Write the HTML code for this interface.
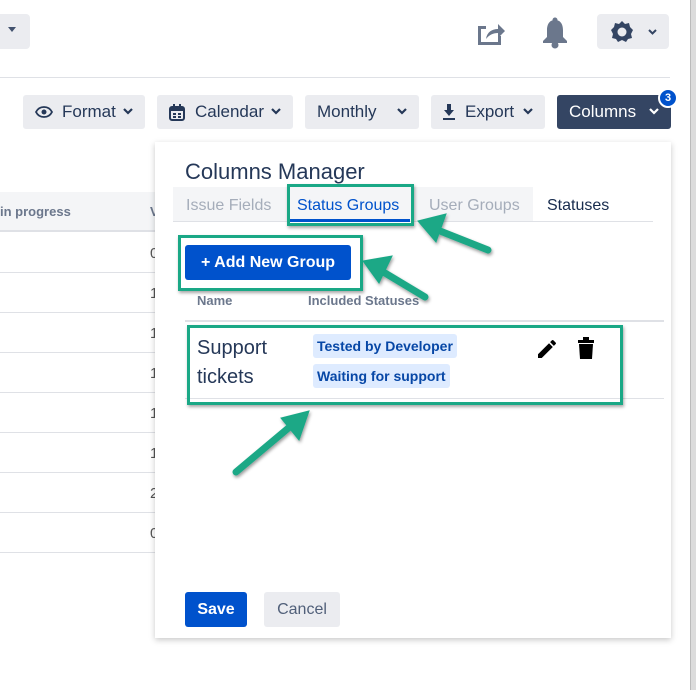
<!DOCTYPE html>
<html><head><meta charset="utf-8"><style>
*{box-sizing:border-box;margin:0;padding:0}
body{width:696px;height:690px;overflow:hidden;background:#fff;font-family:"Liberation Sans",sans-serif;position:relative;color:#172b4d}
.a{position:absolute}
.btn{position:absolute;top:95px;height:34px;background:#ebecf0;border-radius:3px;font-size:17px;color:#253858;display:flex;align-items:center;padding-left:12px}
.chev{position:absolute;right:12px;top:13px}
.rl{position:absolute;left:0;width:155px;height:1px;background:#dfe1e6}
.num{position:absolute;left:150px;font-size:15px;color:#555}
.gb{position:absolute;border:3px solid #1aa886;box-shadow:1px 2px 3px rgba(0,0,0,.35)}
.tag{position:absolute;left:313px;height:24px;background:#deebff;color:#0747a6;font-size:14px;font-weight:bold;padding:4px 4px;border-radius:3px}
</style></head><body>
<div class="a" style="left:0;top:14px;width:30px;height:35px;background:#ebecf0;border-radius:0 4px 4px 0"></div>
<div class="a" style="left:8px;top:27px;border-left:4px solid transparent;border-right:4px solid transparent;border-top:5px solid #42526e"></div>
<svg class="a" style="left:476px;top:20px" width="30" height="26" viewBox="0 0 30 26"><path d="M2 6h8v3H5v13h17v-6h3v9H2z" fill="#6b778c"/><path d="M10 19c1-7 6-10 12-10V4l7 7-7 7v-5c-5 0-9 2-12 6z" fill="#6b778c"/></svg>
<svg class="a" style="left:541px;top:17px" width="28" height="32" viewBox="0 0 28 32"><circle cx="14" cy="3" r="2.5" fill="#6b778c"/><path d="M14 3c-6 0-8 5-8 10v7l-4 4v2h24v-2l-4-4v-7c0-5-2-10-8-10z" fill="#6b778c"/><circle cx="14" cy="28" r="3.5" fill="#6b778c"/></svg>
<div class="a" style="left:597px;top:14px;width:72px;height:35px;background:#ebecf0;border-radius:4px"></div>
<svg class="a" style="left:610px;top:20px" width="24" height="24" viewBox="0 0 24 24"><path d="M12 1l3 3 4-1 1 4 3 3-2 4 1 4-4 1-2 3-4-2-4 2-2-3-4-1 1-4-2-4 3-3 1-4 4 1z" fill="#344563"/><circle cx="12" cy="12" r="4.5" fill="#ebecf0"/></svg>
<svg class="a" style="left:648px;top:29px" width="9" height="6" viewBox="0 0 9 6"><path d="M1 1l3.5 3.5L8 1" fill="none" stroke="#344563" stroke-width="2"/></svg>
<div class="a" style="left:0;top:77px;width:670px;height:1px;background:#dfe1e6"></div>
<div class="a" style="left:690px;top:0;width:6px;height:690px;background:#dcdcdc;border-left:1px solid #bbb"></div>

<div class="btn" style="left:23px;width:122px"><svg width="18" height="12" viewBox="0 0 18 12" style="margin-right:9px"><path d="M1 6c2-4 5-5 8-5s6 1 8 5c-2 4-5 5-8 5S3 10 1 6z" fill="none" stroke="#253858" stroke-width="1.8"/><circle cx="9" cy="6" r="2.5" fill="#253858"/></svg>Format<svg class="chev" width="10" height="7" viewBox="0 0 10 7"><path d="M1 1l4 4 4-4" fill="none" stroke="#253858" stroke-width="2.2"/></svg></div>
<div class="btn" style="left:157px;width:136px"><svg width="16" height="17" viewBox="0 0 16 17" style="margin-right:10px"><rect x="1" y="3" width="14" height="13" rx="2" fill="none" stroke="#253858" stroke-width="2"/><rect x="1" y="3" width="14" height="4" fill="#253858"/><rect x="4" y="9" width="3" height="2" fill="#253858"/><rect x="9" y="9" width="3" height="2" fill="#253858"/><rect x="4" y="12" width="3" height="2" fill="#253858"/><rect x="9" y="12" width="3" height="2" fill="#253858"/><rect x="4" y="0" width="2" height="4" fill="#253858"/><rect x="10" y="0" width="2" height="4" fill="#253858"/></svg>Calendar<svg class="chev" width="10" height="7" viewBox="0 0 10 7"><path d="M1 1l4 4 4-4" fill="none" stroke="#253858" stroke-width="2.2"/></svg></div>
<div class="btn" style="left:305px;width:114px">Monthly<svg class="chev" width="10" height="7" viewBox="0 0 10 7"><path d="M1 1l4 4 4-4" fill="none" stroke="#253858" stroke-width="2.2"/></svg></div>
<div class="btn" style="left:431px;width:114px"><svg width="12" height="16" viewBox="0 0 12 16" style="margin-right:10px"><path d="M4 0h4v6h3l-5 6-5-6h3z" fill="#253858"/><rect x="0" y="14" width="12" height="2" fill="#253858"/></svg>Export<svg class="chev" width="10" height="7" viewBox="0 0 10 7"><path d="M1 1l4 4 4-4" fill="none" stroke="#253858" stroke-width="2.2"/></svg></div>
<div class="btn" style="left:557px;width:114px;background:#344563;color:#fff">Columns<svg class="chev" width="10" height="7" viewBox="0 0 10 7"><path d="M1 1l4 4 4-4" fill="none" stroke="#fff" stroke-width="2.2"/></svg></div>
<div class="a" style="left:658px;top:88px;width:20px;height:20px;border-radius:50%;background:#0052cc;border:2px solid #fff;color:#fff;font-size:11px;font-weight:bold;text-align:center;line-height:16px">3</div>

<div class="a" style="left:0;top:192px;width:155px;height:40px;background:#f4f5f7;border-bottom:2px solid #dfe1e6"></div>
<div class="a" style="left:0;top:204px;font-size:13px;font-weight:bold;color:#6b778c">in progress</div>
<div class="a" style="left:150px;top:204px;font-size:13px;font-weight:bold;color:#6b778c">V</div>
<div class="rl" style="top:272px"></div><div class="rl" style="top:312px"></div><div class="rl" style="top:352px"></div><div class="rl" style="top:392px"></div><div class="rl" style="top:432px"></div><div class="rl" style="top:472px"></div><div class="rl" style="top:512px"></div><div class="rl" style="top:552px"></div>
<div class="num" style="top:245px">0</div><div class="num" style="top:285px">1</div><div class="num" style="top:325px">1</div><div class="num" style="top:365px">1</div><div class="num" style="top:405px">1</div><div class="num" style="top:445px">1</div><div class="num" style="top:485px">2</div><div class="num" style="top:525px">0</div>

<div class="a" style="left:155px;top:142px;width:516px;height:496px;background:#fff;box-shadow:0 2px 6px rgba(0,0,0,.22)"></div>
<div class="a" style="left:185px;top:159px;font-size:22px;color:#253858">Columns Manager</div>
<div class="a" style="left:173px;top:187px;width:360px;height:35px;background:#f4f5f7"></div>
<div class="a" style="left:173px;top:221px;width:480px;height:1px;background:#dfe1e6"></div>
<div class="a" style="left:186px;top:197px;font-size:16px;color:#a5adba">Issue Fields</div>
<div class="a" style="left:297px;top:197px;font-size:16px;color:#0052cc">Status Groups</div>
<div class="a" style="left:290px;top:219px;width:120px;height:3px;background:#0052cc"></div>
<div class="a" style="left:429px;top:197px;font-size:16px;color:#a5adba">User Groups</div>
<div class="a" style="left:547px;top:197px;font-size:16px;color:#172b4d">Statuses</div>
<div class="gb" style="left:287px;top:184px;width:127px;height:42px"></div>

<div class="a" style="left:185px;top:245px;width:166px;height:35px;background:#0052cc;border-radius:3px;color:#fff;font-weight:bold;font-size:16px;text-align:center;line-height:35px">+ Add New Group</div>
<div class="gb" style="left:178px;top:235px;width:185px;height:56px"></div>
<div class="a" style="left:197px;top:293px;font-size:13px;font-weight:bold;color:#6b778c">Name</div>
<div class="a" style="left:308px;top:293px;font-size:13px;font-weight:bold;color:#6b778c">Included Statuses</div>
<div class="a" style="left:185px;top:320px;width:479px;height:2px;background:#dfe1e6"></div>
<div class="a" style="left:197px;top:334px;font-size:20px;line-height:29px;color:#253858">Support<br>tickets</div>
<div class="tag" style="top:334px">Tested by Developer</div>
<div class="tag" style="top:364px">Waiting for support</div>
<svg class="a" style="left:535px;top:337px" width="24" height="24" viewBox="0 0 24 24"><path d="M3 17.25V21h3.75L17.8 9.94l-3.75-3.75zM20.7 7.04a1 1 0 000-1.41l-2.34-2.34a1 1 0 00-1.41 0l-1.83 1.83 3.75 3.75z" fill="#000"/></svg>
<svg class="a" style="left:576px;top:337px" width="20" height="24" viewBox="0 0 20 24"><rect x="2" y="3" width="16" height="3" fill="#000"/><rect x="7" y="0" width="6" height="3" fill="#000"/><path d="M3 7h14l-1 15H4z" fill="#000"/></svg>
<div class="a" style="left:185px;top:398px;width:479px;height:1px;background:#dfe1e6"></div>
<div class="gb" style="left:187px;top:325px;width:436px;height:80px"></div>

<svg class="a" style="left:0;top:0" width="696" height="690" viewBox="0 0 696 690">
<defs><filter id="s"><feDropShadow dx="1" dy="2" stdDeviation="1.5" flood-opacity=".4"/></filter></defs>
<g fill="#1aa886" stroke="#1aa886" filter="url(#s)">
<line x1="488" y1="250" x2="435" y2="229" stroke-width="7" stroke-linecap="round"/>
<polygon points="418,221 446,214 436,242" stroke-width="1"/>
<line x1="425" y1="297" x2="380" y2="270" stroke-width="7" stroke-linecap="round"/>
<polygon points="363,261 392,256 379,283" stroke-width="1"/>
<line x1="236" y1="472" x2="292" y2="425" stroke-width="7" stroke-linecap="round"/>
<polygon points="309,411 299,440 281,418" stroke-width="1"/>
</g></svg>

<div class="a" style="left:185px;top:592px;width:62px;height:35px;background:#0052cc;border-radius:3px;color:#fff;font-weight:bold;font-size:16px;text-align:center;line-height:35px">Save</div>
<div class="a" style="left:264px;top:592px;width:76px;height:35px;background:#ebecf0;border-radius:3px;color:#505f79;font-size:16px;text-align:center;line-height:35px">Cancel</div>
</body></html>
